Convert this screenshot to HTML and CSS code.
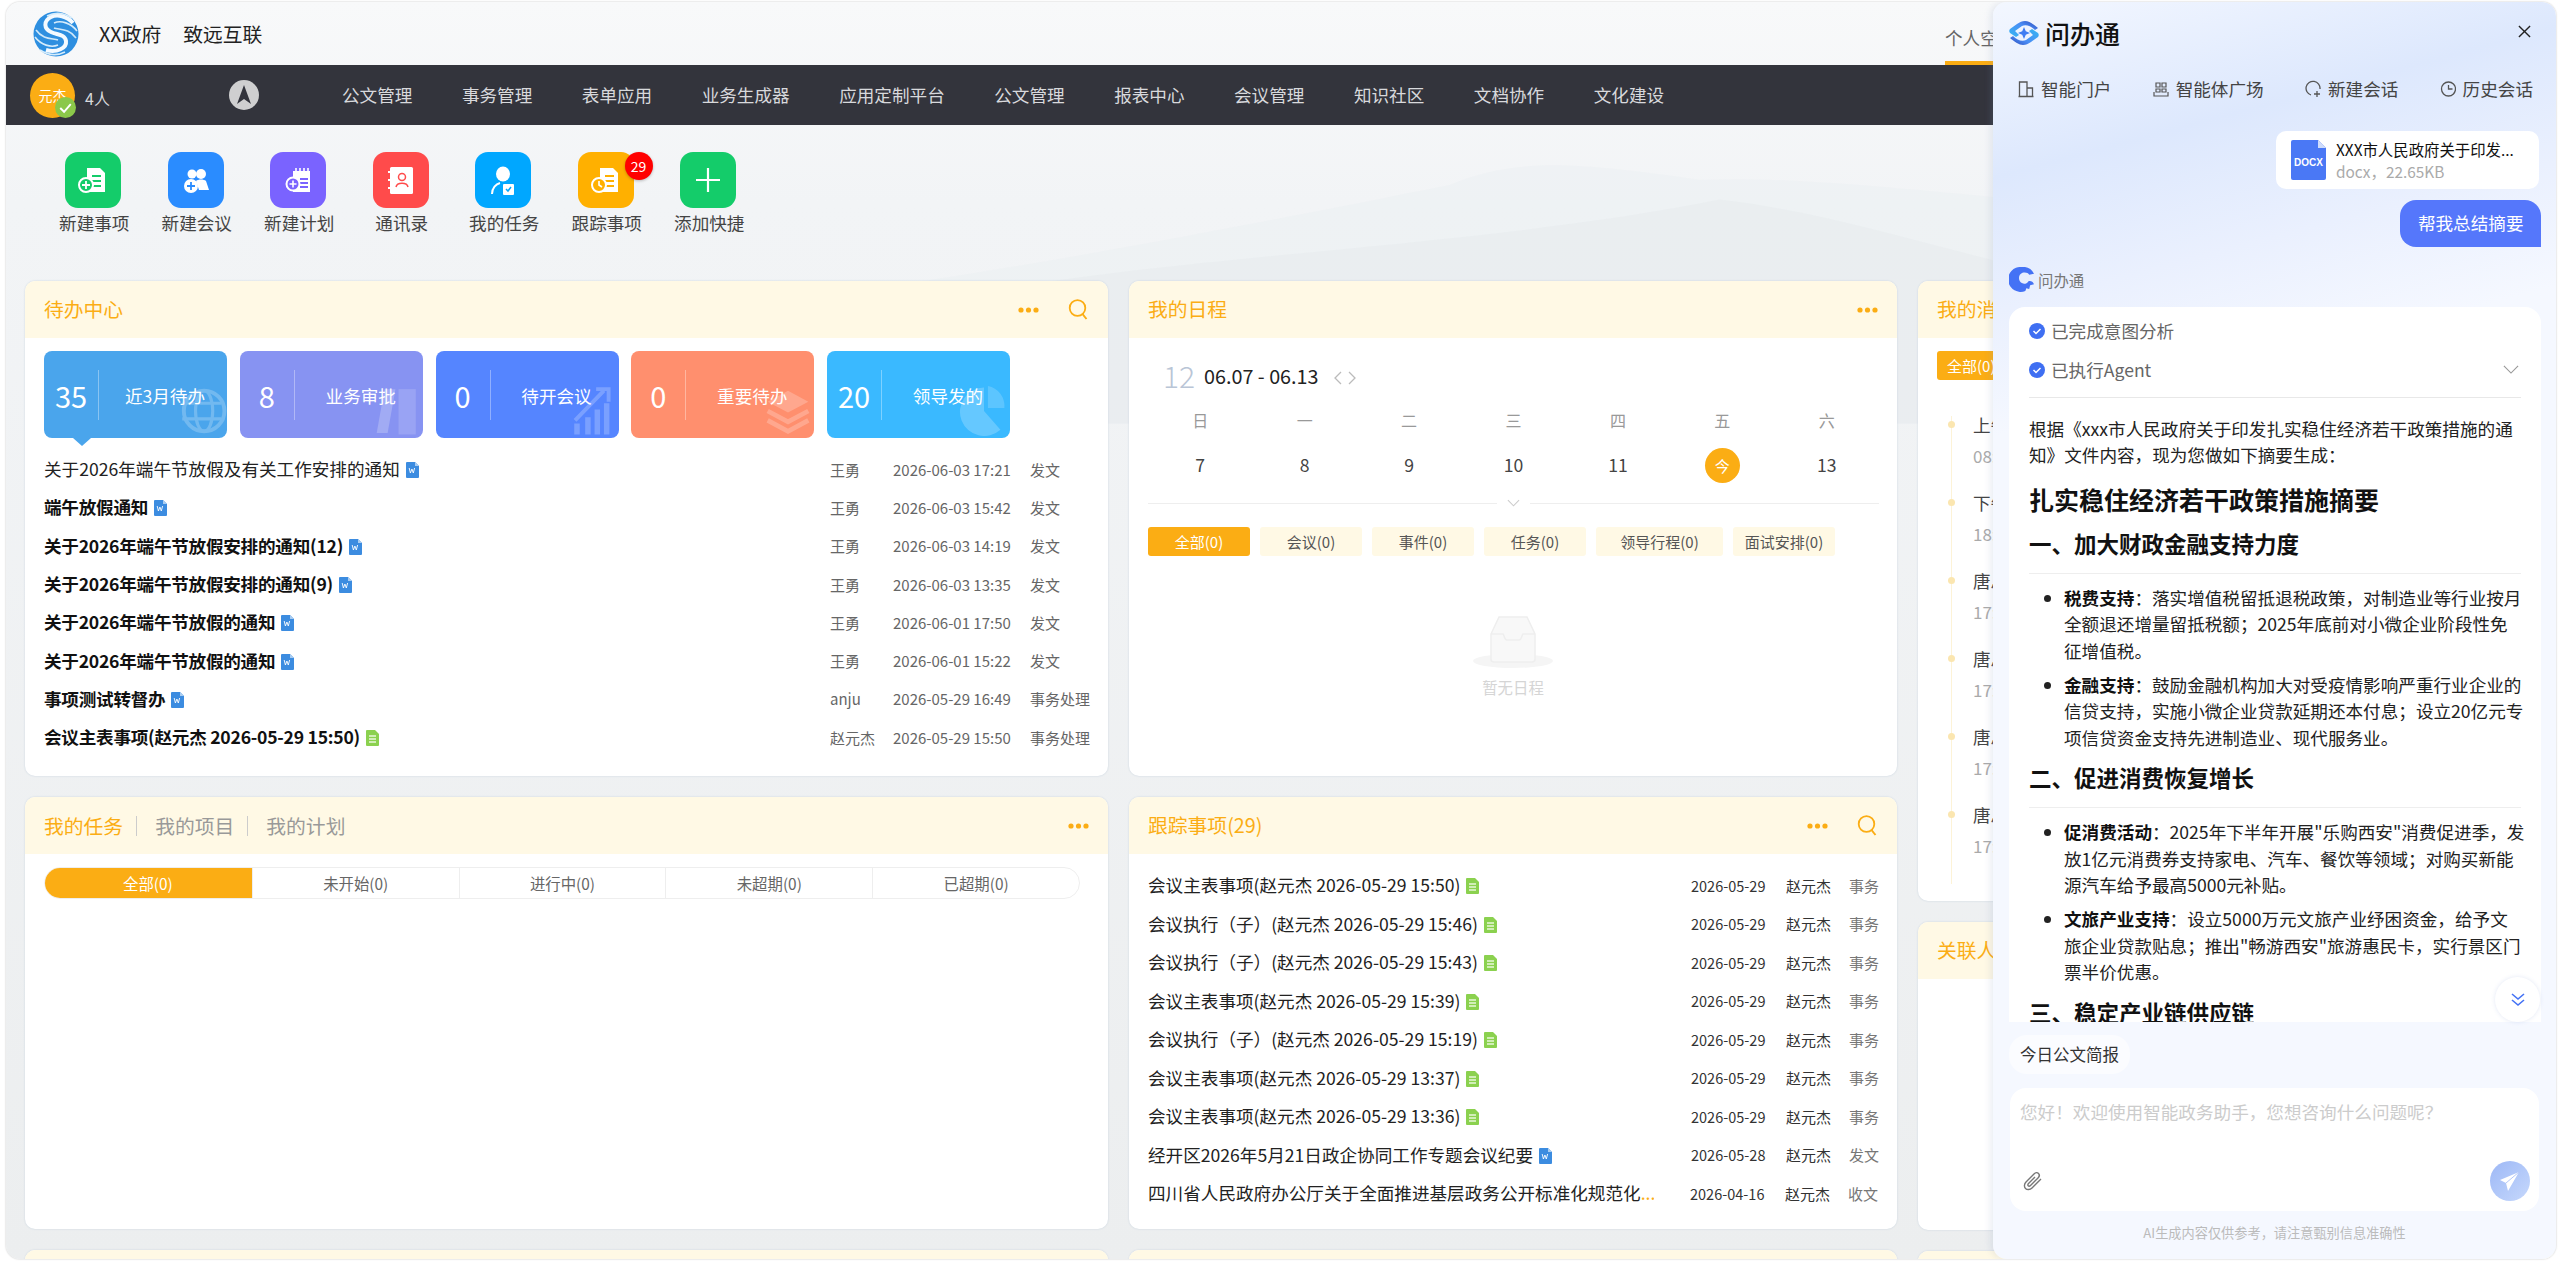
FILE: index.html
```html
<!DOCTYPE html>
<html>
<head>
    <title>协同工作门户</title>
    <link rel="stylesheet" href="styles.css">
</head>
<body>
    <svg class="defs" width="0" height="0">
        <symbol id="dots" viewBox="0 0 21 6"><circle cx="3" cy="3" r="2.6"/><circle cx="10.5" cy="3" r="2.6"/><circle cx="18" cy="3" r="2.6"/></symbol>
        <symbol id="search" viewBox="0 0 21 21"><circle cx="9.5" cy="9" r="7.8" fill="none" stroke="currentColor" stroke-width="1.8"/><path d="M14.5 15l4 5" fill="none" stroke="currentColor" stroke-width="2"/></symbol>
        <symbol id="word" viewBox="0 0 13 16"><path d="M0 1a1 1 0 0 1 1-1h8l4 4v11a1 1 0 0 1-1 1H1a1 1 0 0 1-1-1z" fill="#3c8ce0"/><path d="M9 0l4 4H9z" fill="#a9cdf2"/><path d="M3.2 6l1.2 5 1.5-4 1.4 4 1.3-5" fill="none" stroke="#fff" stroke-width=".9"/></symbol>
        <symbol id="form" viewBox="0 0 13 16"><path d="M0 1a1 1 0 0 1 1-1h8l4 4v11a1 1 0 0 1-1 1H1a1 1 0 0 1-1-1z" fill="#8bd14f"/><path d="M3 6h7M3 9h7M3 12h7" stroke="#e9f7da" stroke-width="1.4"/></symbol>
    </svg>

    <div class="window">
        <div class="topbar">
            <svg class="site-logo" viewBox="0 0 46 46">
                <circle cx="23" cy="23" r="22.5" fill="#2e8fe0"/>
                <path d="M40 12C34 5 24 3 18 6 10 10 11 18 18 21 24 24 32 23 33 30 34 37 24 42 13 39" fill="none" stroke="#f4faff" stroke-width="4"/>
                <path d="M44 20C38 12 28 9 21 12 M2 26C8 34 18 37 25 34 M39 7C31 2 22 1 14 5 M7 39C15 44 24 45 32 41" fill="none" stroke="#d6ecfb" stroke-width="1.6"/>
                <path d="M21 17C26 19 36 17 43 27 M25 29C20 27 10 29 3 19" fill="none" stroke="#cfe8fa" stroke-width="1.6"/>
            </svg>
            <span class="site-name">XX政府</span>
            <span class="site-name site-sub">致远互联</span>
            <div class="space-tab">个人空间</div>
        </div>

        <div class="nav">
            <div class="nav-user">
                <div class="avatar">元杰
                    <svg class="avatar-check" viewBox="0 0 22 22"><circle cx="11" cy="11" r="11" fill="#8bc84a"/><path d="M5.5 11.5l4 4 7-8" fill="none" stroke="#fff" stroke-width="2"/></svg>
                </div>
                <span class="nav-count">4人</span>
                <svg class="compass" viewBox="0 0 30 30"><circle cx="15" cy="15" r="15" fill="#cfcfd0"/><path d="M15 5l7 19-7-5-7 5z" fill="#33343c"/></svg>
            </div>
            <a class="nav-item">公文管理</a>
            <a class="nav-item">事务管理</a>
            <a class="nav-item">表单应用</a>
            <a class="nav-item">业务生成器</a>
            <a class="nav-item">应用定制平台</a>
            <a class="nav-item">公文管理</a>
            <a class="nav-item">报表中心</a>
            <a class="nav-item">会议管理</a>
            <a class="nav-item">知识社区</a>
            <a class="nav-item">文档协作</a>
            <a class="nav-item">文化建设</a>
        </div>

        <div class="content">
            <svg class="bg-art" viewBox="0 0 2560 1140" preserveAspectRatio="none">
                <path d="M900 160C1100 130 1300 90 1450 60 1520 30 1590 40 1700 55 1850 50 2000 80 2560 120V300H900z" fill="#e9edf0" opacity=".35"/>
                <path d="M1000 165C1200 130 1500 120 1720 75 1850 90 1950 130 2100 160V300H1000z" fill="#e3e8ec" opacity=".4"/>
            </svg>

            <div class="quick">
                <div class="quick-item">
                    <div class="quick-icon q-green"><svg viewBox="0 0 56 56"><path d="M22 16h13l5 5v19H22z" fill="#fff"/><path d="M27 24h9M27 29h9M27 34h9" stroke="#14cc6a" stroke-width="2"/><circle cx="21" cy="33" r="7" fill="#14cc6a" stroke="#fff" stroke-width="2"/><path d="M17 33h8M21 29v8" stroke="#fff" stroke-width="1.8"/></svg></div>
                    <span>新建事项</span>
                </div>
                <div class="quick-item">
                    <div class="quick-icon q-blue"><svg viewBox="0 0 56 56"><circle cx="24" cy="22" r="4.5" fill="#fff"/><circle cx="33" cy="22" r="5" fill="#fff"/><path d="M28 29c2-2 8-2 10 0l3 9H31z" fill="#fff"/><circle cx="23" cy="34" r="7" fill="#fff"/><path d="M19 34h8M23 30v8" stroke="#2a8cff" stroke-width="1.8"/></svg></div>
                    <span>新建会议</span>
                </div>
                <div class="quick-item">
                    <div class="quick-icon q-purple"><svg viewBox="0 0 56 56"><path d="M23 19h17v21H23z" fill="#fff"/><path d="M26 16v5M30 16v5M34 16v5M38 16v5" stroke="#fff" stroke-width="1.6"/><path d="M30 27h8M30 31h8M30 35h8" stroke="#7a63ff" stroke-width="1.8"/><circle cx="23" cy="32" r="6.5" fill="#7a63ff" stroke="#fff" stroke-width="2"/><path d="M19.5 32h7M23 28.500v7" stroke="#fff" stroke-width="1.6"/></svg></div>
                    <span>新建计划</span>
                </div>
                <div class="quick-item">
                    <div class="quick-icon q-red"><svg viewBox="0 0 56 56"><rect x="17" y="15" width="23" height="27" rx="1.500" fill="#fff"/><path d="M15 20h5M15 28h5M15 36h5" stroke="#fff" stroke-width="2"/><circle cx="29" cy="25" r="3.500" fill="none" stroke="#ff4b4b" stroke-width="1.500"/><path d="M23 35c1-5 11-5 12 0" fill="none" stroke="#ff4b4b" stroke-width="1.500"/></svg></div>
                    <span>通讯录</span>
                </div>
                <div class="quick-item">
                    <div class="quick-icon q-sky"><svg viewBox="0 0 56 56"><ellipse cx="28" cy="22" rx="7" ry="7.500" fill="#fff"/><path d="M17 42c0-6 4-10 8-11" fill="none" stroke="#fff" stroke-width="2"/><rect x="28" y="32" width="11" height="11" rx="1" fill="#fff"/><path d="M31 37l2 2 3-4" fill="none" stroke="#00a7ff" stroke-width="1.500"/></svg></div>
                    <span>我的任务</span>
                </div>
                <div class="quick-item">
                    <div class="quick-icon q-orange"><svg viewBox="0 0 56 56"><path d="M22 16h13l5 5v19H22z" fill="#fff"/><path d="M27 24h9M27 29h9M27 34h9" stroke="#ffb000" stroke-width="2"/><circle cx="21" cy="33" r="7" fill="#ffb000" stroke="#fff" stroke-width="2"/><path d="M21 29v4l3 2" fill="none" stroke="#fff" stroke-width="1.600"/></svg></div>
                    <span>跟踪事项</span>
                    <b class="quick-badge">29</b>
                </div>
                <div class="quick-item">
                    <div class="quick-icon q-green"><svg viewBox="0 0 56 56"><path d="M16 28h24M28 16v24" stroke="#fff" stroke-width="2.200"/></svg></div>
                    <span>添加快捷</span>
                </div>
            </div>

            <div class="board">
                <div class="col col-wide">
                    <div class="card h-todo">
                        <div class="card-head">
                            <span class="card-title">待办中心</span>
                            <div class="card-tools">
                                <svg class="ic-dots"><use href="#dots"/></svg>
                                <svg class="ic-search"><use href="#search"/></svg>
                            </div>
                        </div>
                        <div class="tiles">
                            <div class="tile t1 tile-on"><b>35</b><span>近3月待办</span>
                                <svg class="tile-art" viewBox="0 0 52 64"><circle cx="30" cy="32" r="26" fill="none" stroke="#fff" stroke-width="5"/><ellipse cx="30" cy="32" rx="11" ry="26" fill="none" stroke="#fff" stroke-width="4"/><path d="M2 22h50M2 42h50" stroke="#fff" stroke-width="4"/></svg>
                            </div>
                            <div class="tile t2"><b>8</b><span>业务审批</span>
                                <svg class="tile-art" viewBox="0 0 52 64"><path d="M0 60L10 4h14L14 60z" fill="#fff"/><path d="M28 4h22v58H28z" fill="#fff" opacity=".7"/></svg>
                            </div>
                            <div class="tile t3"><b>0</b><span>待开会议</span>
                                <svg class="tile-art" viewBox="0 0 52 64"><path d="M3 44L40 6M30 4h16v16" fill="none" stroke="#fff" stroke-width="5"/><path d="M2 48h7v14H2zM16 40h7v22h-7zM28 30h7v32h-7zM40 22h7v40h-7z" fill="#fff"/></svg>
                            </div>
                            <div class="tile t4"><b>0</b><span>重要待办</span>
                                <svg class="tile-art" viewBox="0 0 52 64"><path d="M26 6l26 14-26 14L0 20z" fill="#fff"/><path d="M0 32l26 14 26-14M0 44l26 14 26-14" fill="none" stroke="#fff" stroke-width="6"/></svg>
                            </div>
                            <div class="tile t5"><b>20</b><span>领导发的</span>
                                <svg class="tile-art" viewBox="0 0 52 64"><path d="M26 2a31 31 0 1 0 21 54L26 32z" fill="#fff"/><path d="M31 0a26 26 0 0 1 21 28H31z" fill="#fff" opacity=".8"/></svg>
                            </div>
                        </div>
                        <div class="list todo-list">
                            <div class="row"><div class="row-title">关于2026年端午节放假及有关工作安排的通知<svg class="doc"><use href="#word"/></svg></div><span class="m-who">王勇</span><span class="m-when">2026-06-03 17:21</span><span class="m-kind">发文</span></div>
                            <div class="row row-new"><div class="row-title">端午放假通知<svg class="doc"><use href="#word"/></svg></div><span class="m-who">王勇</span><span class="m-when">2026-06-03 15:42</span><span class="m-kind">发文</span></div>
                            <div class="row row-new"><div class="row-title">关于2026年端午节放假安排的通知(12)<svg class="doc"><use href="#word"/></svg></div><span class="m-who">王勇</span><span class="m-when">2026-06-03 14:19</span><span class="m-kind">发文</span></div>
                            <div class="row row-new"><div class="row-title">关于2026年端午节放假安排的通知(9)<svg class="doc"><use href="#word"/></svg></div><span class="m-who">王勇</span><span class="m-when">2026-06-03 13:35</span><span class="m-kind">发文</span></div>
                            <div class="row row-new"><div class="row-title">关于2026年端午节放假的通知<svg class="doc"><use href="#word"/></svg></div><span class="m-who">王勇</span><span class="m-when">2026-06-01 17:50</span><span class="m-kind">发文</span></div>
                            <div class="row row-new"><div class="row-title">关于2026年端午节放假的通知<svg class="doc"><use href="#word"/></svg></div><span class="m-who">王勇</span><span class="m-when">2026-06-01 15:22</span><span class="m-kind">发文</span></div>
                            <div class="row row-new"><div class="row-title">事项测试转督办<svg class="doc"><use href="#word"/></svg></div><span class="m-who">anju</span><span class="m-when">2026-05-29 16:49</span><span class="m-kind">事务处理</span></div>
                            <div class="row row-new"><div class="row-title">会议主表事项(赵元杰 2026-05-29 15:50)<svg class="doc"><use href="#form"/></svg></div><span class="m-who">赵元杰</span><span class="m-when">2026-05-29 15:50</span><span class="m-kind">事务处理</span></div>
                        </div>
                    </div>

                    <div class="card h-lower">
                        <div class="card-head">
                            <div class="head-tabs">
                                <span class="card-title">我的任务</span>
                                <span class="head-tab">我的项目</span>
                                <span class="head-tab">我的计划</span>
                            </div>
                            <div class="card-tools"><svg class="ic-dots"><use href="#dots"/></svg></div>
                        </div>
                        <div class="segments">
                            <span class="seg seg-on">全部(0)</span>
                            <span class="seg">未开始(0)</span>
                            <span class="seg">进行中(0)</span>
                            <span class="seg">未超期(0)</span>
                            <span class="seg">已超期(0)</span>
                        </div>
                    </div>

                    <div class="card h-rest"><div class="card-head"></div></div>
                </div>

                <div class="col col-mid">
                    <div class="card h-todo">
                        <div class="card-head">
                            <span class="card-title">我的日程</span>
                            <div class="card-tools"><svg class="ic-dots"><use href="#dots"/></svg></div>
                        </div>
                        <div class="cal-title">
                            <span class="cal-month">12</span>
                            <span class="cal-range">06.07 - 06.13</span>
                            <svg class="cal-arrows" viewBox="0 0 24 14"><path d="M8 1L2 7l6 6M16 1l6 6-6 6" fill="none" stroke="#bbb" stroke-width="1.300"/></svg>
                        </div>
                        <div class="cal-grid">
                            <span class="wk">日</span><span class="wk">一</span><span class="wk">二</span><span class="wk">三</span><span class="wk">四</span><span class="wk">五</span><span class="wk">六</span>
                            <span class="day">7</span><span class="day">8</span><span class="day">9</span><span class="day">10</span><span class="day">11</span><span class="day"><i class="today">今</i></span><span class="day">13</span>
                        </div>
                        <div class="cal-fold">
                            <svg viewBox="0 0 14 8"><path d="M1 1l6 6 6-6" fill="none" stroke="#ccc" stroke-width="1.200"/></svg>
                        </div>
                        <div class="filters">
                            <span class="filter filter-on">全部(0)</span>
                            <span class="filter">会议(0)</span>
                            <span class="filter">事件(0)</span>
                            <span class="filter">任务(0)</span>
                            <span class="filter filter-wide">领导行程(0)</span>
                            <span class="filter">面试安排(0)</span>
                        </div>
                        <div class="empty">
                            <svg viewBox="0 0 80 52"><ellipse cx="40" cy="45" rx="40" ry="7" fill="#f5f5f5"/><path d="M18 18L26 1h28l8 17v25a3 3 0 0 1-3 3H21a3 3 0 0 1-3-3z" fill="#f8f8f8" stroke="#eee" stroke-width="1.500"/><path d="M18 18h12c1 0 1 6 4 6h12c3 0 3-6 4-6h12" fill="none" stroke="#eee" stroke-width="1.500"/></svg>
                            <span>暂无日程</span>
                        </div>
                    </div>

                    <div class="card h-lower">
                        <div class="card-head">
                            <span class="card-title">跟踪事项(29)</span>
                            <div class="card-tools">
                                <svg class="ic-dots"><use href="#dots"/></svg>
                                <svg class="ic-search"><use href="#search"/></svg>
                            </div>
                        </div>
                        <div class="list track-list">
                            <div class="row"><div class="row-title">会议主表事项(赵元杰 2026-05-29 15:50)<svg class="doc"><use href="#form"/></svg></div><span class="t-when">2026-05-29</span><span class="t-who">赵元杰</span><span class="t-kind">事务</span></div>
                            <div class="row"><div class="row-title">会议执行（子）(赵元杰 2026-05-29 15:46)<svg class="doc"><use href="#form"/></svg></div><span class="t-when">2026-05-29</span><span class="t-who">赵元杰</span><span class="t-kind">事务</span></div>
                            <div class="row"><div class="row-title">会议执行（子）(赵元杰 2026-05-29 15:43)<svg class="doc"><use href="#form"/></svg></div><span class="t-when">2026-05-29</span><span class="t-who">赵元杰</span><span class="t-kind">事务</span></div>
                            <div class="row"><div class="row-title">会议主表事项(赵元杰 2026-05-29 15:39)<svg class="doc"><use href="#form"/></svg></div><span class="t-when">2026-05-29</span><span class="t-who">赵元杰</span><span class="t-kind">事务</span></div>
                            <div class="row"><div class="row-title">会议执行（子）(赵元杰 2026-05-29 15:19)<svg class="doc"><use href="#form"/></svg></div><span class="t-when">2026-05-29</span><span class="t-who">赵元杰</span><span class="t-kind">事务</span></div>
                            <div class="row"><div class="row-title">会议主表事项(赵元杰 2026-05-29 13:37)<svg class="doc"><use href="#form"/></svg></div><span class="t-when">2026-05-29</span><span class="t-who">赵元杰</span><span class="t-kind">事务</span></div>
                            <div class="row"><div class="row-title">会议主表事项(赵元杰 2026-05-29 13:36)<svg class="doc"><use href="#form"/></svg></div><span class="t-when">2026-05-29</span><span class="t-who">赵元杰</span><span class="t-kind">事务</span></div>
                            <div class="row"><div class="row-title">经开区2026年5月21日政企协同工作专题会议纪要<svg class="doc"><use href="#word"/></svg></div><span class="t-when">2026-05-28</span><span class="t-who">赵元杰</span><span class="t-kind">发文</span></div>
                            <div class="row"><div class="row-title clip">四川省人民政府办公厅关于全面推进基层政务公开标准化规范化<span class="more">...</span></div><span class="t-when">2026-04-16</span><span class="t-who">赵元杰</span><span class="t-kind">收文</span></div>
                        </div>
                    </div>

                    <div class="card h-rest"><div class="card-head"></div></div>
                </div>

                <div class="col col-side">
                    <div class="card h-msg">
                        <div class="card-head"><span class="card-title">我的消息</span></div>
                        <div class="filters msg-filter"><span class="filter filter-on">全部(0)</span></div>
                        <div class="timeline">
                            <div class="tl-item"><p>上午</p><small>08:00</small></div>
                            <div class="tl-item"><p>下午</p><small>18:00</small></div>
                            <div class="tl-item"><p>唐总</p><small>17:00</small></div>
                            <div class="tl-item"><p>唐总</p><small>17:00</small></div>
                            <div class="tl-item"><p>唐总</p><small>17:00</small></div>
                            <div class="tl-item"><p>唐总</p><small>17:00</small></div>
                        </div>
                    </div>
                    <div class="card h-rel">
                        <div class="card-head"><span class="card-title">关联人员</span></div>
                    </div>
                    <div class="card h-rest"><div class="card-head"></div></div>
                </div>
            </div>
        </div>

        <div class="panel">
            <div class="panel-head">
                <div class="brand">
                    <svg class="brand-logo" viewBox="0 0 30 26">
                        <defs><linearGradient id="bl" x1="0" y1="1" x2="1" y2="0"><stop offset="0" stop-color="#35b8f2"/><stop offset=".6" stop-color="#4a8cf5"/><stop offset="1" stop-color="#2d49b8"/></linearGradient></defs>
                        <path id="band" d="M29 8C24 4 20 1 16 1 13 1 11 2 8 4L1 9C0 10 0 12 1 13L7 17 10 15 6 11 13 6C17 4 22 6 26 10z" fill="url(#bl)"/>
                        <use href="#band" transform="rotate(180 15 13)"/>
                        <path d="M15 7l1.800 4.200L21 13l-4.200 1.800L15 19l-1.800-4.200L9 13l4.200-1.800z" fill="#3f7df2"/>
                    </svg>
                    <span>问办通</span>
                </div>
                <svg class="close" viewBox="0 0 14 14"><path d="M1 1l12 12M13 1L1 13" stroke="#222" stroke-width="1.500"/></svg>
            </div>
            <div class="panel-tabs">
                <span class="ptab"><svg viewBox="0 0 16 18"><path d="M1.500 16.500V2h7.500v14.500M9 8h5.500v8.500M.5 16.500h15" fill="none" stroke="#555" stroke-width="1.300"/></svg>智能门户</span>
                <span class="ptab"><svg viewBox="0 0 16 18"><path d="M3 3h4v4H3zM9 3h4v4H9zM3 9h4v3H3zM9 9h4v3H9z" fill="none" stroke="#555" stroke-width="1.200"/><path d="M1 12v4h14v-4" fill="none" stroke="#555" stroke-width="1.200"/></svg>智能体广场</span>
                <span class="ptab"><svg viewBox="0 0 16 18"><path d="M6 15A7 7 0 1 1 15 9" fill="none" stroke="#555" stroke-width="1.300"/><path d="M9 14h6M12 11v6" stroke="#555" stroke-width="1.300"/></svg>新建会话</span>
                <span class="ptab"><svg viewBox="0 0 16 18"><circle cx="8.500" cy="9" r="7" fill="none" stroke="#555" stroke-width="1.300"/><path d="M8.500 5v4h4" fill="none" stroke="#555" stroke-width="1.300"/></svg>历史会话</span>
            </div>
            <div class="chat">
                <div class="file-card">
                    <svg class="file-ic" viewBox="0 0 35 40"><path d="M0 2a2 2 0 0 1 2-2h25l8 8v30a2 2 0 0 1-2 2H2a2 2 0 0 1-2-2z" fill="#4a78f5"/><path d="M27 0l8 8h-8z" fill="#cfdcfb"/><text x="17.500" y="26" text-anchor="middle">DOCX</text></svg>
                    <div class="file-info">
                        <p>XXX市人民政府关于印发...</p>
                        <small>docx，22.65KB</small>
                    </div>
                </div>
                <div class="bubble">帮我总结摘要</div>
                <div class="bot-label">
                    <svg viewBox="0 0 26 26"><path d="M13 0a13 13 0 1 0 4 25l1-3 3 1 1-4 4-1c-1-3-4-4-6-3-1 2-4 3-6 2a6 6 0 0 1 0-11c3-1 6 0 7 2l5-1A13 13 0 0 0 13 0z" fill="#4472f5"/></svg>
                    问办通
                </div>
                <div class="answer">
                    <div class="step"><svg viewBox="0 0 16 16"><circle cx="8" cy="8" r="8" fill="#3f6ff2"/><path d="M4.500 8l2.500 2.500 4.500-4.500" fill="none" stroke="#fff" stroke-width="1.500"/></svg>已完成意图分析</div>
                    <div class="step"><svg viewBox="0 0 16 16"><circle cx="8" cy="8" r="8" fill="#3f6ff2"/><path d="M4.500 8l2.500 2.500 4.500-4.500" fill="none" stroke="#fff" stroke-width="1.500"/></svg>已执行Agent
                        <svg class="step-more" viewBox="0 0 18 10"><path d="M1 1l8 8 8-8" fill="none" stroke="#999" stroke-width="1.300"/></svg>
                    </div>
                    <div class="doc-body">
                        <p>根据《xxx市人民政府关于印发扎实稳住经济若干政策措施的通知》文件内容，现为您做如下摘要生成：</p>
                        <h1>扎实稳住经济若干政策措施摘要</h1>
                        <h2>一、加大财政金融支持力度</h2>
                        <ul>
                            <li><b>税费支持</b>：落实增值税留抵退税政策，对制造业等行业按月全额退还增量留抵税额；2025年底前对小微企业阶段性免征增值税。</li>
                            <li><b>金融支持</b>：鼓励金融机构加大对受疫情影响严重行业企业的信贷支持，实施小微企业贷款延期还本付息；设立20亿元专项信贷资金支持先进制造业、现代服务业。</li>
                        </ul>
                        <h2>二、促进消费恢复增长</h2>
                        <ul>
                            <li><b>促消费活动</b>：2025年下半年开展"乐购西安"消费促进季，发放1亿元消费券支持家电、汽车、餐饮等领域；对购买新能源汽车给予最高5000元补贴。</li>
                            <li><b>文旅产业支持</b>：设立5000万元文旅产业纾困资金，给予文旅企业贷款贴息；推出"畅游西安"旅游惠民卡，实行景区门票半价优惠。</li>
                        </ul>
                        <h2>三、稳定产业链供应链</h2>
                    </div>
                </div>
                <div class="to-bottom"><svg viewBox="0 0 14 14"><path d="M1 1l6 5 6-5M1 7l6 5 6-5" fill="none" stroke="#4472f5" stroke-width="1.600"/></svg></div>
            </div>
            <div class="composer">
                <div class="chip">今日公文简报</div>
                <div class="input-box">
                    <div class="placeholder">您好！欢迎使用智能政务助手，您想咨询什么问题呢？</div>
                    <div class="input-foot">
                        <svg class="clip-ic" viewBox="0 0 22 22"><path d="M19 9l-9 9c-2 2-5 2-6.500.5S2 14 4 12l8-8c1.500-1.500 3.500-1.500 4.500-.5s1 3-.5 4.500l-7.500 7.500c-.8.8-1.800.8-2.300.3s-.5-1.500.3-2.300L13 7" fill="none" stroke="#777" stroke-width="1.400"/></svg>
                        <div class="send"><svg viewBox="0 0 22 22"><path d="M20 2L1 10l6 3 2 8z" fill="#fff"/><path d="M20 2L7 13" stroke="#b4c8f9" stroke-width="1"/></svg></div>
                    </div>
                </div>
                <div class="disclaimer">AI生成内容仅供参考，请注意甄别信息准确性</div>
            </div>
        </div>
    </div>
</body>
</html>
```

FILE: styles.css
```css
* {
    box-sizing: border-box;
}

body {
    margin: 0;
    padding: 2px 4px 2px 6px;
    height: 1261px;
    overflow: hidden;
    background-color: #fff;
    font-family: "Noto Sans CJK SC", "Noto Sans", sans-serif;
    font-size: 16px;
    color: #222;
}

p, h1, h2, ul {
    margin: 0;
    padding: 0;
}

.defs {
    position: absolute;
}

.window {
    position: relative;
    height: 100%;
    overflow: hidden;
    border-radius: 14px;
    box-shadow: 0 0 2px #bbb;
    background: linear-gradient(180deg, #f8f9fa 0, #f2f4f6 200px, #eceeef 100%);
    display: flex;
    flex-direction: column;
}

/* top bar */
.topbar {
    height: 63px;
    flex: none;
    display: flex;
    align-items: center;
    padding-left: 27px;
    line-height: 28px;
}

.site-logo {
    width: 46px;
    height: 46px;
    margin-right: 20px;
}

.site-name {
    font-size: 19.800px;
    color: #222;
}

.site-sub {
    margin-left: 22px;
}

.space-tab {
    position: absolute;
    left: 1939px;
    top: 0;
    height: 63px;
    line-height: 72px;
    font-size: 17.600px;
    color: #666;
    border-bottom: 4px solid #fbad14;
    white-space: nowrap;
}

/* nav */
.nav {
    height: 60px;
    flex: none;
    background-color: #33343c;
    display: flex;
    align-items: center;
    gap: 49.500px;
    color: #d8d9dc;
    font-size: 17.600px;
    line-height: 22px;
}

.nav-item {
    white-space: nowrap;
}

.nav-user {
    width: 286.500px;
    flex: none;
    display: flex;
    align-items: center;
    padding-left: 24px;
}

.avatar {
    position: relative;
    width: 45px;
    height: 45px;
    border-radius: 50%;
    background-color: #fbad14;
    color: #fff;
    font-size: 14px;
    line-height: 45px;
    text-align: center;
}

.avatar-check {
    position: absolute;
    right: -1px;
    bottom: 0;
    width: 21px;
    height: 21px;
}

.nav-count {
    margin: 6px 0 0 10px;
    font-size: 16px;
    width: 28px;
}

.compass {
    width: 30px;
    height: 30px;
    margin-left: 116px;
}

/* content */
.content {
    position: relative;
    flex: 1;
    min-height: 0;
}

.bg-art {
    position: absolute;
    left: 0;
    top: 0;
    width: 100%;
    height: 100%;
}

.quick {
    position: relative;
    display: flex;
    height: 156px;
    padding: 27px 0 0 36px;
}

.quick-item {
    position: relative;
    width: 102.500px;
    display: flex;
    flex-direction: column;
    align-items: center;
    font-size: 17.600px;
    line-height: 26px;
    color: #444;
    white-space: nowrap;
}

.quick-item span {
    margin-left: 2px;
}

.quick-icon {
    width: 56px;
    height: 56px;
    border-radius: 13px;
    margin-bottom: 2px;
}

.quick-icon svg {
    display: block;
}

.q-green { background-color: #14cc6a; }
.q-blue { background-color: #2a8cff; }
.q-purple { background-color: #7a63ff; }
.q-red { background-color: #ff4b4b; }
.q-sky { background-color: #00a7ff; }
.q-orange { background-color: #ffb000; }

.quick-badge {
    position: absolute;
    left: 70px;
    top: 0;
    width: 28px;
    height: 28px;
    border-radius: 50%;
    background-color: #f00;
    color: #fff;
    font-size: 14px;
    font-weight: 400;
    line-height: 28px;
    text-align: center;
    box-shadow: 0 1px 3px rgba(0, 0, 0, .25);
}

.board {
    position: relative;
    display: flex;
    gap: 21px;
    padding-left: 19px;
}

.col {
    flex: none;
    display: flex;
    flex-direction: column;
    gap: 21px;
}

.col-wide { width: 1083px; }
.col-mid { width: 768px; }
.col-side { width: 640px; }

.card {
    background-color: #fff;
    border-radius: 10px;
    overflow: hidden;
    box-shadow: 0 0 2px #c4d0dc;
}

.h-todo { height: 495px; }
.h-lower { height: 432px; }
.h-msg { height: 620px; }
.h-rel { height: 308px; }
.h-rest { height: 120px; }

.card-head {
    height: 57px;
    padding: 0 19px;
    background-color: #fff9e5;
    display: flex;
    align-items: center;
    justify-content: space-between;
}

.card-title {
    font-size: 19.800px;
    line-height: 26px;
    margin-top: -2px;
    color: #fbad14;
    white-space: nowrap;
}

.card-tools {
    display: flex;
    align-items: center;
    gap: 29px;
    color: #fbad14;
    fill: #fbad14;
}

.ic-dots {
    width: 21px;
    height: 6px;
}

.ic-search {
    width: 21px;
    height: 21px;
}

.head-tabs {
    display: flex;
    align-items: center;
}

.head-tabs .card-title {
    margin-top: 0;
    padding-right: 13px;
    border-right: 1px solid #ccc;
    line-height: 20px;
}

.head-tab {
    font-size: 19.800px;
    line-height: 20px;
    color: #999;
    padding: 0 13px 0 18px;
    border-right: 1px solid #ccc;
    white-space: nowrap;
}

.head-tab:last-child {
    border-right: none;
}

/* stat tiles */
.tiles {
    display: flex;
    gap: 12.750px;
    padding: 13px 0 0 19px;
}

.tile {
    position: relative;
    width: 183px;
    height: 87px;
    border-radius: 8px;
    color: #fff;
    display: flex;
    align-items: center;
}

.tile b {
    width: 55px;
    height: 50px;
    border-right: 1px solid rgba(255, 255, 255, .35);
    font-size: 29px;
    font-weight: 400;
    line-height: 50px;
    text-align: center;
}

.tile span {
    position: relative;
    z-index: 1;
    flex: 1;
    font-size: 17.600px;
    line-height: 24px;
    margin-top: 2px;
    padding-left: 4px;
    text-align: center;
}

.tile-on::after {
    content: "";
    position: absolute;
    left: 29px;
    bottom: -8px;
    border-left: 9px solid transparent;
    border-right: 9px solid transparent;
    border-top: 8px solid #4aa5ec;
}

.tile-art {
    position: absolute;
    right: 0;
    bottom: 2px;
    width: 52px;
    height: 50px;
    opacity: .22;
}

.t1 { background-color: #4aa5ec; }
.t2 { background-color: #8793f2; }
.t3 { background-color: #5585ff; }
.t4 { background-color: #ff8f6e; }
.t5 { background-color: #3ab9ff; }

/* rows */
.list {
    padding: 0 18px 0 19px;
}

.todo-list {
    margin-top: 12px;
}

.track-list {
    margin-top: 12px;
}

.row {
    display: flex;
    align-items: center;
    height: 38.500px;
    white-space: nowrap;
}

.todo-list .row {
    height: 38.300px;
}

.row-title {
    flex: 1;
    min-width: 0;
    font-size: 17.600px;
    line-height: 24px;
    color: #222;
}

.row-new .row-title {
    font-weight: 700;
    letter-spacing: -.25px;
    color: #111;
}

.row-title.clip {
    flex: none;
    width: 506px;
    overflow: hidden;
}

.more {
    color: #fbad14;
}

.doc {
    width: 13px;
    height: 16px;
    margin-left: 6px;
    vertical-align: -2px;
}

.m-who {
    width: 63px;
    font-size: 15px;
    color: #666;
}

.m-when {
    width: 137px;
    font-size: 15px;
    color: #666;
}

.m-kind {
    width: 60px;
    font-size: 15px;
    color: #666;
}

.t-when {
    margin-left: 36px;
    width: 95px;
    font-size: 14.500px;
    color: #333;
}

.t-who {
    width: 63px;
    font-size: 15px;
    color: #333;
}

.t-kind {
    width: 30px;
    font-size: 15px;
    color: #777;
}

/* tasks */
.segments {
    display: grid;
    grid-template-columns: repeat(5, 1fr);
    margin: 13px 0 0 19px;
    width: 1036px;
    height: 32px;
    border-radius: 16px;
    border: 1px solid #eee;
    overflow: hidden;
}

.seg {
    border-left: 1px solid #eee;
    font-size: 15.400px;
    line-height: 30px;
    text-align: center;
    color: #666;
}

.seg-on {
    background-color: #fbad14;
    border-left: none;
    color: #fff;
    margin: -1px 0 -1px -1px;
    line-height: 32px;
}

/* calendar */
.cal-title {
    display: flex;
    align-items: center;
    height: 30px;
    margin: 22px 0 0 34px;
}

.cal-month {
    font-size: 30px;
    font-weight: 300;
    line-height: 30px;
    color: #b9c5d6;
    width: 41px;
}

.cal-range {
    font-size: 19.800px;
    line-height: 24px;
    margin-top: 2px;
    color: #222;
    white-space: nowrap;
}

.cal-arrows {
    width: 24px;
    height: 14px;
    margin: 6px 0 0 14px;
}

.cal-grid {
    display: grid;
    grid-template-columns: repeat(7, 104.430px);
    grid-template-rows: 36px 44px;
    margin: 12px 0 0 19px;
    text-align: center;
}

.wk {
    font-size: 16px;
    line-height: 36px;
    color: #999;
}

.day {
    font-size: 17.600px;
    line-height: 35px;
    padding-top: 9px;
    color: #444;
}

.today {
    display: inline-block;
    width: 35px;
    height: 35px;
    border-radius: 50%;
    background-color: #fbad14;
    color: #fff;
    font-style: normal;
    font-size: 15px;
}

.cal-fold {
    position: relative;
    margin: 21px 18px 0 19px;
    height: 1px;
    background-color: #eee;
}

.cal-fold svg {
    position: absolute;
    left: 349px;
    top: -6px;
    width: 33px;
    height: 12px;
    background-color: #fff;
    padding: 0 10px;
}

.filters {
    display: flex;
    gap: 10px;
    margin: 23px 0 0 19px;
}

.filter {
    height: 29px;
    min-width: 102px;
    padding: 0 11px;
    border-radius: 3px;
    background-color: #fff9e5;
    font-size: 15px;
    line-height: 29px;
    text-align: center;
    color: #555;
    white-space: nowrap;
}

.filter-wide {
    width: 127px;
}

.filter-on {
    background-color: #fbad14;
    color: #fff;
}

.msg-filter {
    margin-top: 13px;
}

.msg-filter .filter {
    padding: 0 10px;
    text-align: left;
}

.empty {
    display: flex;
    flex-direction: column;
    align-items: center;
    margin-top: 60px;
    font-size: 15.400px;
    line-height: 22px;
    color: #d5d5d5;
}

.empty svg {
    width: 80px;
    height: 52px;
    margin-bottom: 8px;
}

/* timeline under the panel */
.timeline {
    position: relative;
    margin: 36px 0 0 33px;
}

.timeline::before {
    content: "";
    position: absolute;
    left: 0;
    top: 0;
    bottom: 0;
    width: 1px;
    background-color: #fdf3d7;
}

.tl-item {
    position: relative;
    height: 78px;
    padding: 0 0 0 22px;
}

.tl-item::before {
    content: "";
    position: absolute;
    left: -3px;
    top: 5px;
    width: 7px;
    height: 7px;
    border-radius: 50%;
    background-color: #fbe6b0;
}

.tl-item p {
    font-size: 17.600px;
    line-height: 18px;
    color: #444;
}

.tl-item small {
    display: block;
    margin-top: 13px;
    font-size: 17px;
    line-height: 18px;
    color: #aaa;
}

/* assistant panel */
.panel {
    position: absolute;
    right: 0;
    top: 0;
    bottom: 0;
    width: 563px;
    border-radius: 14px 14px 0 14px;
    box-shadow: -3px 0 6px rgba(120, 140, 180, .15);
    background: linear-gradient(165deg, #f3f7ff 0, #dde8fd 170px, #eaf0fe 300px, #f5f8ff 420px);
    display: flex;
    flex-direction: column;
}

.panel-head {
    height: 62px;
    flex: none;
    display: flex;
    align-items: center;
    justify-content: space-between;
    padding: 0 25px 0 16px;
}

.brand {
    display: flex;
    align-items: center;
    gap: 6px;
    font-size: 25px;
    font-weight: 500;
    line-height: 32px;
    color: #111;
}

.brand-logo {
    width: 30px;
    height: 26px;
}

.close {
    width: 13px;
    height: 13px;
    margin-bottom: 4px;
}

.panel-tabs {
    height: 50px;
    flex: none;
    display: flex;
    justify-content: space-between;
    padding: 0 23px 0 25px;
    align-items: center;
}

.ptab {
    display: flex;
    align-items: center;
    gap: 7px;
    font-size: 17.600px;
    line-height: 24px;
    color: #444;
    white-space: nowrap;
}

.ptab svg {
    width: 16px;
    height: 18px;
}

.chat {
    position: relative;
    flex: 1;
    min-height: 0;
    display: flex;
    flex-direction: column;
    padding: 17px 15px 0 16px;
}

.file-card {
    align-self: flex-end;
    width: 263px;
    height: 58px;
    flex: none;
    margin-right: 2px;
    border-radius: 10px;
    background-color: #fff;
    display: flex;
    align-items: center;
    padding-left: 15px;
}

.file-ic {
    width: 35px;
    height: 40px;
    margin-right: 10px;
}

.file-ic text {
    fill: #fff;
    font-family: "Liberation Sans", sans-serif;
    font-size: 10px;
    font-weight: 700;
}

.file-info p {
    font-size: 15.400px;
    line-height: 22px;
    color: #111;
    white-space: nowrap;
}

.file-info small {
    display: block;
    font-size: 15.400px;
    line-height: 22px;
    color: #aaa;
}

.bubble {
    align-self: flex-end;
    flex: none;
    height: 47px;
    margin-top: 11px;
    padding: 0 17.500px;
    border-radius: 16px 16px 0 16px;
    background-color: #5577fb;
    color: #fff;
    font-size: 17.600px;
    line-height: 45px;
}

.bot-label {
    flex: none;
    display: flex;
    align-items: center;
    gap: 4px;
    height: 25px;
    margin-top: 20px;
    font-size: 15.400px;
    color: #777;
}

.bot-label svg {
    width: 25px;
    height: 25px;
}

.answer {
    flex: 1;
    min-height: 0;
    margin-top: 15px;
    padding: 4px 20px 0;
    border-radius: 16px 16px 0 0;
    background-color: #fff;
    overflow: hidden;
}

.step {
    display: flex;
    align-items: center;
    gap: 6px;
    height: 39px;
    font-size: 17.600px;
    color: #666;
}

.step svg {
    width: 16px;
    height: 16px;
}

.step .step-more {
    width: 16px;
    height: 9px;
    margin-left: auto;
    margin-right: 2px;
}

.doc-body {
    margin-top: 8px;
    padding-top: 18px;
    border-top: 1px solid #e8e8e8;
    font-size: 17.600px;
    line-height: 26.400px;
    color: #222;
}

.doc-body h1 {
    margin-top: 12px;
    font-size: 25px;
    font-weight: 700;
    line-height: 36px;
    color: #111;
}

.doc-body h2 {
    margin-top: 10px;
    padding-bottom: 14px;
    border-bottom: 1px solid #eee;
    font-size: 22.500px;
    font-weight: 700;
    line-height: 32px;
    color: #111;
}

.doc-body ul {
    padding: 11px 0 0 35px;
    margin-right: -4px;
}

.doc-body li {
    margin-bottom: 8px;
}

.doc-body li b {
    color: #111;
}

.to-bottom {
    position: absolute;
    right: 16px;
    bottom: 0;
    width: 45px;
    height: 45px;
    border-radius: 50%;
    background-color: #fff;
    box-shadow: 0 0 4px rgba(100, 130, 200, .18);
    display: flex;
    align-items: center;
    justify-content: center;
}

.to-bottom svg {
    width: 14px;
    height: 14px;
}

.composer {
    height: 237px;
    flex: none;
    padding: 13px 16px 0;
}

.chip {
    display: inline-block;
    height: 39px;
    padding: 0 11px;
    border-radius: 18px;
    background-color: #fbfcff;
    font-size: 16.500px;
    line-height: 39px;
    color: #333;
}

.input-box {
    width: 529px;
    height: 123px;
    margin: 14px 0 0 1px;
    padding: 11px 9px 10px 10px;
    border-radius: 16px;
    background-color: #fff;
    display: flex;
    flex-direction: column;
    justify-content: space-between;
}

.placeholder {
    font-size: 17.600px;
    line-height: 26px;
    color: #ccc;
}

.input-foot {
    display: flex;
    align-items: center;
    justify-content: space-between;
}

.clip-ic {
    width: 22px;
    height: 22px;
    margin-left: 2px;
}

.send {
    width: 40px;
    height: 40px;
    border-radius: 50%;
    background: linear-gradient(135deg, #9db8f6, #c6d8fc);
    display: flex;
    align-items: center;
    justify-content: center;
}

.send svg {
    width: 22px;
    height: 22px;
}

.disclaimer {
    margin-top: 12px;
    font-size: 13.200px;
    line-height: 20px;
    text-align: center;
    color: #bbb;
}
```
